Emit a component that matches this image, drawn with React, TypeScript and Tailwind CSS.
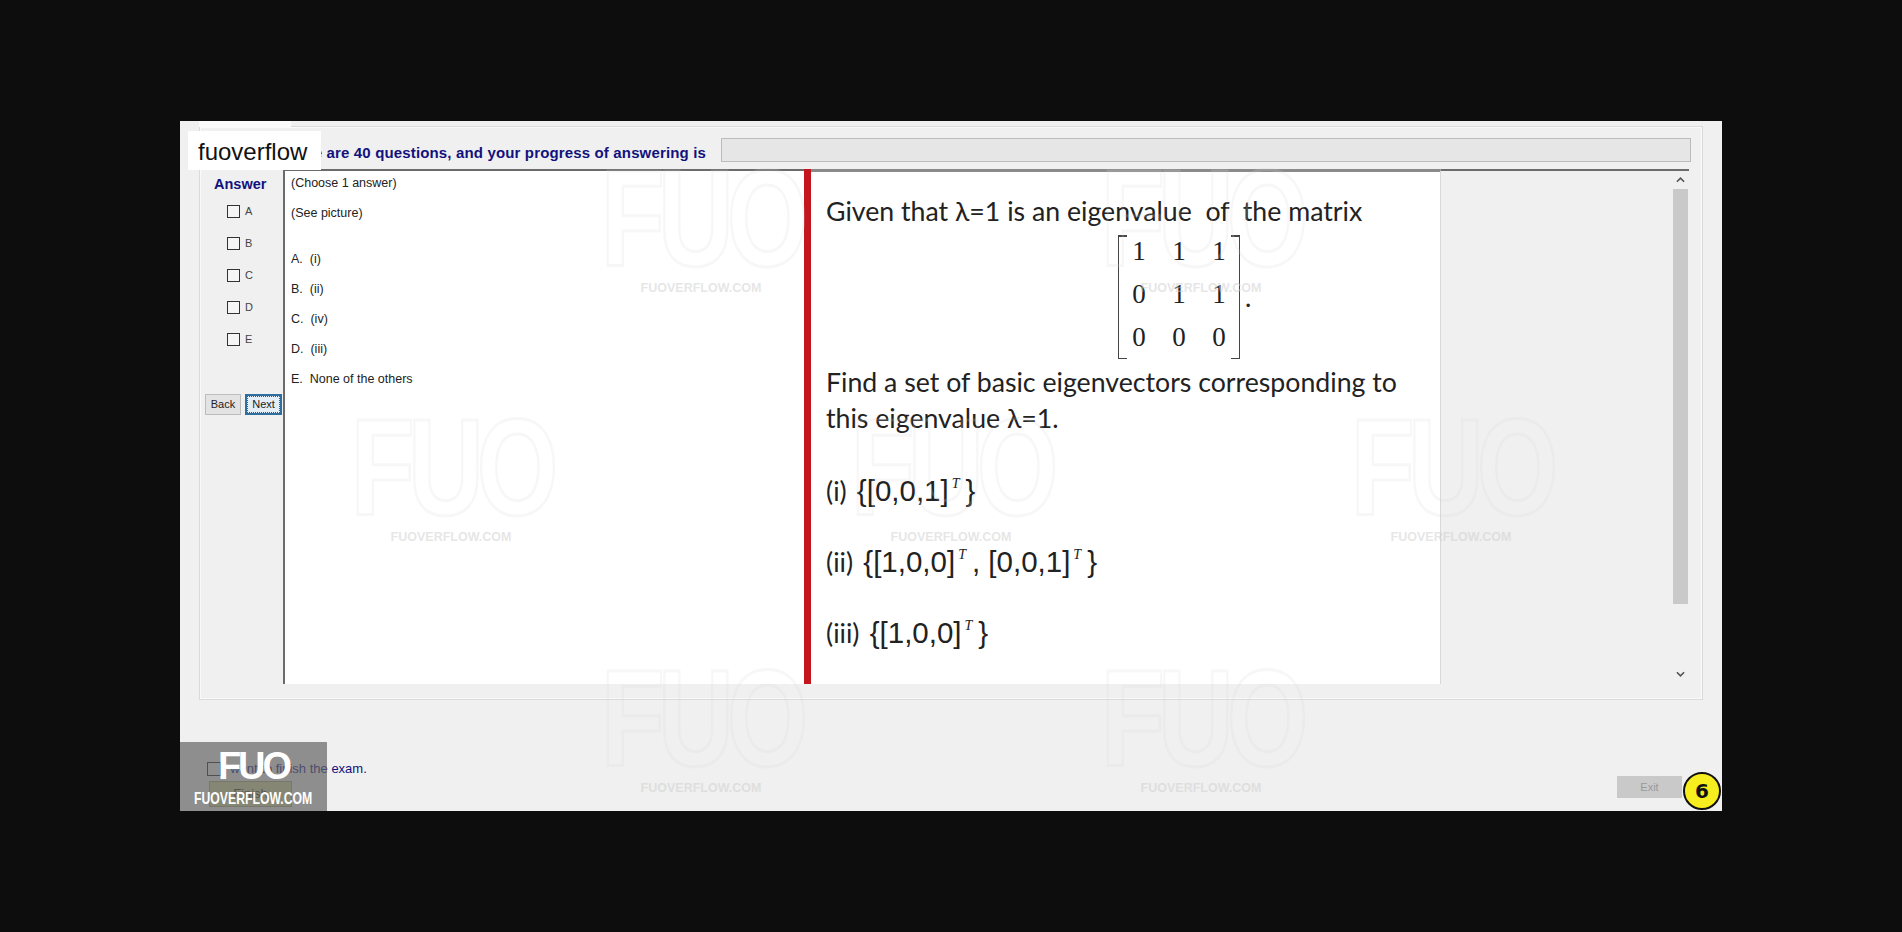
const logos = [
  { left: "left-[416px]", top: "top-[47px]" },
  { left: "left-[916px]", top: "top-[47px]" },
  { left: "left-[166px]", top: "top-[296px]" },
  { left: "left-[666px]", top: "top-[296px]" },
  { left: "left-[1166px]", top: "top-[296px]" },
  { left: "left-[416px]", top: "top-[547px]" },
  { left: "left-[916px]", top: "top-[547px]" },
]

const choices = ["A", "B", "C", "D", "E"]
const answers = ["A.  (i)", "B.  (ii)", "C.  (iv)", "D.  (iii)", "E.  None of the others"]
const matrix = ["1", "1", "1", "0", "1", "1", "0", "0", "0"]

function Sup() {
  return <sup className="font-['Liberation_Serif',serif] italic text-[14px] ml-[3px] mr-[6px] top-[-13px]">T</sup>
}

function Label({ children }: { children: string }) {
  return <span className="font-['Lato',sans-serif] text-[26.7px] mr-[2px]">{children}</span>
}

function Watermark({ left, top }: { left: string; top: string }) {
  return (
    <div className={`absolute ${left} ${top} w-[210px] flex flex-col items-center pointer-events-none`}>
      <div className="h-[100px] text-[138px] leading-[100px] font-bold tracking-[-9px] scale-x-[0.76] text-transparent [-webkit-text-stroke:3px_rgba(215,215,215,0.2)]">
        FUO
      </div>
      <div className="mt-[13px] text-[12.5px] leading-[14px] font-bold text-[rgba(205,205,205,0.5)]">
        FUOVERFLOW.COM
      </div>
    </div>
  )
}

export default function App() {
  return (
    <div className="h-[932px] overflow-hidden bg-[#0d0d0d] pt-[121px] pl-[180px] font-['Liberation_Sans',sans-serif]">
      <div className="relative w-[1542px] h-[690px] bg-[#f0f0f0] px-[19px] pt-[5px]">
        <div className="absolute left-[19px] top-0 w-[92px] h-[6px] bg-[#fafafa]" />

        <div className="w-[1504px] h-[574px] border border-[#dadada] shadow-[inset_0_0_0_1px_#fafafa] px-[1px]">
          <div className="h-[42px] pt-[11px] flex">
            <div className="w-[520px] h-[24px] pr-[15px] text-right text-[15px] leading-[30px] font-bold tracking-[0.15px] text-[#12127e] whitespace-nowrap overflow-hidden">
              There are 40 questions, and your progress of answering is
            </div>
            <div className="w-[970px] h-[24px] border border-[#bcbcbc] bg-[#e6e6e6]" />
          </div>

          <div className="flex h-[515px]">
            <div className="w-[82px] shrink-0 flex flex-col">
              <div className="pl-[13px] h-[31px] pt-[7px] text-[14.5px] leading-[16px] font-bold text-[#12127e]">Answer</div>
              <div className="flex flex-col gap-[19px] pt-[5px] pl-[26px]">
                {choices.map(c => (
                  <div key={c} className="flex items-center h-[13px]">
                    <span className="w-[13px] h-[13px] border border-[#333] bg-[#f5f5f5]" />
                    <span className="ml-[5px] text-[11px] leading-[13px] text-[#444]">{c}</span>
                  </div>
                ))}
              </div>
              <div className="flex gap-[4px] mt-[48px] pl-[4px]">
                <button className="w-[36px] h-[21px] border border-[#bdbdbd] bg-[#e3e3e3] text-[11px] text-[#222]">Back</button>
                <button className="w-[37px] h-[21px] border-2 border-[#2f6f9f] outline-1 -outline-offset-3 outline-dotted outline-[#555] bg-[#e3eef6] text-[11px] text-[#222]">Next</button>
              </div>
            </div>

            <div className="w-[521px] shrink-0 bg-white border-l-2 border-t-2 border-[#6b6b6b] pl-[6px] text-[12.5px] leading-[16px] text-[#222]">
              <p className="mt-[4px]">(Choose 1 answer)</p>
              <p className="mt-[14px]">(See picture)</p>
              <div className="mt-[30px] flex flex-col gap-[14px]">
                {answers.map(a => (
                  <p key={a} className="whitespace-pre">{a}</p>
                ))}
              </div>
            </div>

            <div className="w-[7px] shrink-0 bg-[#c4161f]" />

            <div className="w-[630px] shrink-0 bg-white border-t-[3px] border-[#8a8a8a] border-r border-r-[#d8d8d8] pl-[15px] text-[#222] text-[26.7px] leading-[36px] whitespace-pre">
              <p className="mt-[21px] font-['Lato',sans-serif]">Given that λ=1 is an eigenvalue  of  the matrix</p>
              <div className="flex items-end ml-[292px] mt-[6px] h-[124px]">
                <div className="relative w-[122px] h-[124px] grid grid-cols-3 content-start pt-[1px] font-['Liberation_Serif',serif] text-[27px] text-center border-l-[1.5px] border-r-[1.5px] border-[#444]">
                  <span className="absolute left-0 top-0 w-[8px] h-[1.5px] bg-[#444]" />
                  <span className="absolute left-0 bottom-0 w-[8px] h-[1.5px] bg-[#444]" />
                  <span className="absolute right-0 top-0 w-[8px] h-[1.5px] bg-[#444]" />
                  <span className="absolute right-0 bottom-0 w-[8px] h-[1.5px] bg-[#444]" />
                  {matrix.map((n, i) => (
                    <span key={i} className="h-[43px] leading-[31px]">{n}</span>
                  ))}
                </div>
                <span className="ml-[5px] mb-[52px] leading-[20px] font-['Lato',sans-serif]">.</span>
              </div>
              <p className="mt-[5px] font-['Lato',sans-serif]">Find a set of basic eigenvectors corresponding to</p>
              <p className="font-['Lato',sans-serif]">this eigenvalue λ=1.</p>
              <div className="text-[29.5px] flex flex-col gap-[35px] mt-[37px]">
                <p><Label>(i)</Label> {"{"}[0,0,1]<Sup />{"}"}</p>
                <p><Label>(ii)</Label> {"{"}[1,0,0]<Sup />, [0,0,1]<Sup />{"}"}</p>
                <p><Label>(iii)</Label> {"{"}[1,0,0]<Sup />{"}"}</p>
              </div>
            </div>

            <div className="w-[248px] shrink-0 border-t-2 border-[#6b6b6b] flex justify-end">
              <div className="w-[15px] flex flex-col items-center mr-[1px] text-[#555]">
                <svg viewBox="0 0 10 6" className="w-[9px] h-[6px] mt-[6px]" fill="none" stroke="currentColor" strokeWidth="1.8">
                  <path d="M1 5l4-4 4 4" />
                </svg>
                <div className="w-[15px] h-[415px] mt-[6px] bg-[#c9c9c9]" />
                <svg viewBox="0 0 10 6" className="w-[9px] h-[6px] mt-[67px]" fill="none" stroke="currentColor" strokeWidth="1.8">
                  <path d="M1 1l4 4 4-4" />
                </svg>
              </div>
            </div>
          </div>
        </div>

        <div className="flex mt-[61px] justify-between">
          <div className="pl-[8px]">
            <div className="flex items-center">
              <span className="w-[14px] h-[14px] border border-[#222]" />
              <span className="ml-[2px] text-[13px] leading-[16px] text-[#12127e]">I want to finish the exam.</span>
            </div>
            <button className="mt-[4px] ml-[2px] w-[83px] h-[26px] border border-[#a8a878] bg-[#d5d59a] text-[13px] text-[#333]">Finish</button>
          </div>
          <div className="pt-[13px] pr-[21px]">
            <button className="w-[65px] h-[22px] bg-[#c9c9c9] text-[11px] text-[#999]">Exit</button>
          </div>
        </div>

        {logos.map((l, i) => (
          <Watermark key={i} left={l.left} top={l.top} />
        ))}

        <div className="absolute left-[8px] top-[10px] w-[133px] h-[39px] bg-white pl-[10px] text-[24px] leading-[42px] text-[#111]">fuoverflow</div>

        <div className="absolute left-0 bottom-0 w-[147px] h-[69px] bg-[rgba(100,100,100,0.7)] flex flex-col items-center">
          <div className="h-[36px] mt-[6px] text-[38px] leading-[36px] font-bold tracking-[-3px] text-white">FUO</div>
          <div className="mt-[6px] text-[17px] leading-[18px] font-bold text-white scale-x-[0.72] whitespace-nowrap">FUOVERFLOW.COM</div>
        </div>

        <div className="absolute right-[1px] top-[651px] w-[38px] h-[38px] rounded-full bg-[#f6ee1e] border-2 border-[#111] flex items-center justify-center text-[20px] font-bold text-[#111] font-['DejaVu_Sans',sans-serif]">6</div>
      </div>
    </div>
  )
}
